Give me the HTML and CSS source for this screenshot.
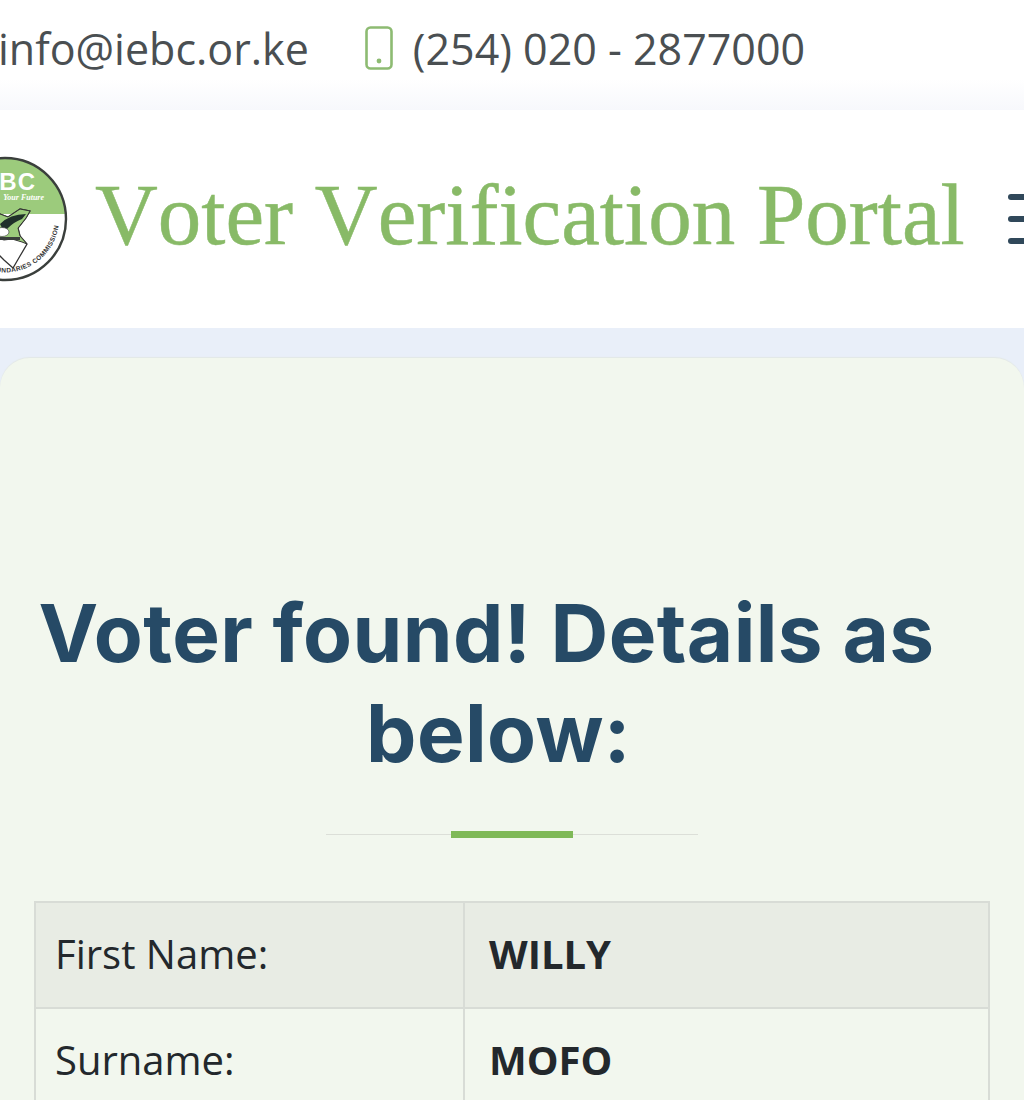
FILE: index.html
```html
<!DOCTYPE html>
<html lang="en">
<head>
<meta charset="utf-8">
<title>Voter Verification Portal</title>
<link rel="stylesheet" href="styles.css">
</head>
<body>
<div class="topbar">
  <span class="contact">info@iebc.or.ke</span>
  <svg class="phone" viewBox="0 0 28 44" width="28" height="44" aria-hidden="true">
    <rect x="1.5" y="1.5" width="25" height="41" rx="4" fill="none" stroke="#8dbb72" stroke-width="2.6"/>
    <circle cx="14" cy="35" r="2.4" fill="#8dbb72"/>
  </svg>
  <span class="contact">(254) 020 - 2877000</span>
</div>
<header class="header">
  <svg class="logo" viewBox="0 0 126 126" width="126" height="126" aria-hidden="true">
    <defs>
      <clipPath id="disc"><circle cx="63" cy="63" r="61"/></clipPath>
      <path id="rim" d="M44 113 A54 54 0 0 0 117 62"/>
    </defs>
    <circle cx="63" cy="63" r="61" fill="#fff"/>
    <rect x="0" y="0" width="126" height="58" fill="#9ccb7c" clip-path="url(#disc)"/>
    <text x="94" y="34" class="logo-iebc">IEBC</text>
    <text x="102" y="44" class="logo-tag">Your Future</text>
    <path d="M48 62 L58 58 L66 61 L78 53 L88 55 L84 62 L76 72 L78 80 L85 88 L78 100 L71 112 L62 104 L56 98 L50 92 L48 84 Z" fill="#fff" stroke="#333" stroke-width="1.3"/>
    <path d="M48 62 L58 58 L66 61 L78 53 L88 55 L84 62 L76 72 L78 80 L85 88 L80 86 L70 83 L62 84 L48 80 Z" fill="#9ccb7c" stroke="#333" stroke-width="1"/>
    <path d="M58 68 Q68 58 84 58 L80 63 Q72 66 66 72 L62 76 Z" fill="#20302a"/>
    <ellipse cx="60" cy="76" rx="7" ry="4.5" fill="#fff" stroke="#333" stroke-width=".6"/>
    <rect x="40" y="81" width="38" height="3" fill="#3a3f3c"/>
    <text class="logo-rim"><textPath href="#rim">BOUNDARIES COMMISSION</textPath></text>
    <circle cx="63" cy="63" r="61" fill="none" stroke="#3a3f3c" stroke-width="2.4"/>
  </svg>
  <h1 class="brand">Voter Verification Portal</h1>
  <div class="burger" aria-hidden="true"><i></i><i></i><i></i></div>
</header>
<main class="band">
  <section class="card">
    <h2 class="title">Voter found! Details as <span class="title-end">below:</span></h2>
    <div class="rule"><span></span></div>
    <table class="details">
      <tr class="shaded"><td>First Name:</td><th>WILLY</th></tr>
      <tr><td>Surname:</td><th>MOFO</th></tr>
    </table>
  </section>
</main>
</body>
</html>
```
FILE: styles.css
```css
html, body {
  margin: 0;
  padding: 0;
  height: 1100px;
  overflow: hidden;
  background: #e9eff9;
}
.topbar {
  height: 110px;
  box-sizing: border-box;
  display: flex;
  align-items: center;
  padding-bottom: 14px;
  background: linear-gradient(#fff 0, #fff 72%, #f7f8fc 100%);
}
.contact {
  font: 400 43px/1 "Open Sans", sans-serif;
  color: #4a4f52;
  white-space: nowrap;
  margin-left: -2px;
}
.phone { margin: 0 22px 0 56px; }
.header {
  height: 218px;
  background: #fff;
  display: flex;
  align-items: center;
  white-space: nowrap;
}
.logo { margin-left: -58px; flex: none; }
.brand {
  margin: -9px 0 0 27px;
  font: 400 87px/1 "Liberation Serif", serif;
  font-kerning: none;
  color: #88ba67;
  -webkit-text-stroke: 0.5px #88ba67;
  width: 868px;
  flex: none;
}
.burger {
  margin-left: 45px;
  width: 40px;
  flex: none;
  display: flex;
  flex-direction: column;
  gap: 16px;
}
.burger i {
  display: block;
  height: 6px;
  border-radius: 3px;
  background: #30485a;
}
.logo-iebc { font: 700 24px "Liberation Sans", sans-serif; fill: #fff; text-anchor: end; letter-spacing: 1px; }
.logo-tag { font: italic 700 8px "Liberation Serif", serif; fill: #fff; text-anchor: end; }
.logo-rim { font: 700 6.5px "Liberation Sans", sans-serif; fill: #333; letter-spacing: .4px; }
.band { padding-top: 30px; }
.card {
  height: 742px;
  box-sizing: border-box;
  padding: 225px 34px 0;
  background: #f2f7ee;
  border-radius: 30px 30px 0 0;
  box-shadow: 0 -1px 1px #e3e8e6;
  text-align: center;
}
.title {
  margin: 0;
  padding-right: 51px;
  font: 700 80px/100px Inter, sans-serif;
  color: #264a66;
  letter-spacing: 0.4px;
}
.title-end {
  display: block;
  padding-left: 24px;
}
.rule {
  width: 372px;
  height: 1px;
  margin: 51px auto 0;
  background: #dcdfd8;
  display: flex;
  justify-content: center;
  align-items: center;
}
.rule span {
  width: 122px;
  height: 7px;
  background: #7fb957;
  flex: none;
}
.details {
  width: 956px;
  margin-top: 66px;
  border-collapse: collapse;
  table-layout: fixed;
  text-align: left;
  font-size: 40px;
  color: #23282c;
}
.details td, .details th {
  height: 106px;
  box-sizing: border-box;
  padding: 0 19px 3px;
  border: 2px solid #d8dcd6;
  font-family: "Open Sans", sans-serif;
}
.details td { width: 429px; font-weight: 400; }
.details th { font-weight: 700; padding-left: 24px; }
.shaded { background: #e8ece4; }
```
